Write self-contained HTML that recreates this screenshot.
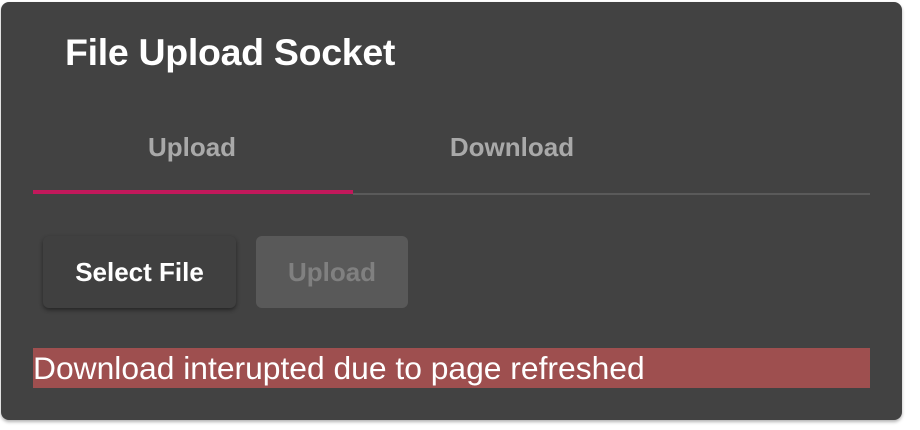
<!DOCTYPE html>
<html><head><style>
body{margin:0;background:#fff;width:920px;height:430px;overflow:hidden;font-family:"Liberation Sans",sans-serif}
.card{position:absolute;left:1px;top:2px;width:901px;height:418px;background:#424242;border-radius:8px;box-shadow:0 2px 3px rgba(0,0,0,.3)}
.t{position:absolute;left:64px;top:29px;font-size:37.5px;font-weight:bold;color:#fff;letter-spacing:-0.3px}
.tab{position:absolute;top:130px;font-size:26px;font-weight:bold;color:#a9a9a9;transform:translateX(-50%)}
.ind{position:absolute;left:32px;top:188px;width:320px;height:4px;background:#c2185b}
.div{position:absolute;left:352px;top:191px;width:517px;height:2px;background:#5a5a5a}
.b{position:absolute;top:234px;height:72px;border-radius:6px;font-size:26px;font-weight:bold;display:flex;align-items:center;justify-content:center}
.err{position:absolute;left:32px;top:346px;width:837px;height:40px;background:#9e4f4f;color:#fff;font-size:31.8px;line-height:40px;white-space:nowrap}
</style></head><body>
<div class="card">
<div class="t">File Upload Socket</div>
<div class="tab" style="left:191px">Upload</div>
<div class="tab" style="left:511px">Download</div>
<div class="ind"></div><div class="div"></div>
<div class="b" style="left:42px;width:193px;background:#404040;color:#fff;box-shadow:0 2px 4px rgba(0,0,0,.45)">Select File</div>
<div class="b" style="left:255px;width:152px;background:#595959;color:#808080">Upload</div>
<div class="err">Download interupted due to page refreshed</div>
</div>
</body></html>
